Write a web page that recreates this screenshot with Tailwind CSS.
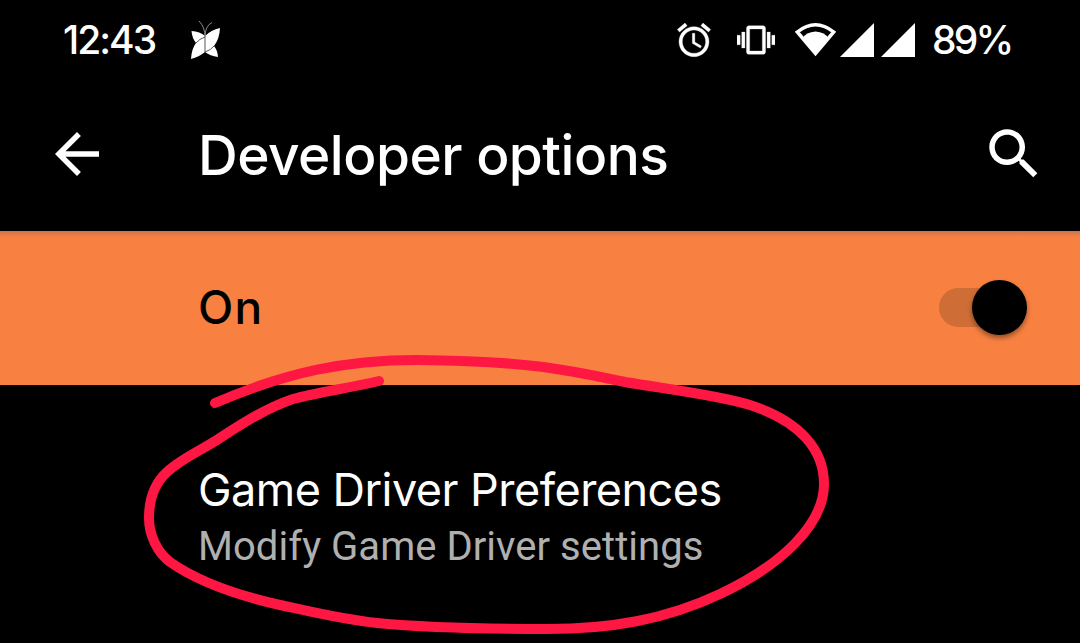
<!DOCTYPE html>
<html lang="en">
<head>
    <meta charset="UTF-8">
    <meta name="viewport" content="width=device-width, initial-scale=1.0">
    <title>Developer options</title>

    <!-- Tailwind CSS -->
    <script src="https://cdn.jsdelivr.net/npm/@tailwindcss/browser@4"></script>
</head>

<body class="bg-black text-white font-['Inter',sans-serif] overflow-hidden">

<div class="relative w-[1080px] h-[643px] overflow-hidden flex flex-col">

    <!-- Status bar -->
    <div class="h-20 shrink-0 flex items-center pl-[63px] pr-[69px]">

        <span class="w-[127px] text-[39px] leading-[82px] font-medium tracking-[-2px]">12:43</span>

        <!-- Butterfly -->
        <svg class="w-[30px] h-10" viewBox="0 0 30 40" fill="white">
            <path d="M1.500 11Q10 11.500 15 16Q21 10 30 8Q29.500 19 24 26Q27.500 30 28 37Q20 36 15 32Q9 37 1 39Q1.500 29 6 23Q2 18 1.500 11Z"/>
            <path d="M15 15V33M15 17Q9 19 6 23M15 32Q21 30 24 26" fill="none" stroke="#444" stroke-width="0.900"/>
            <path d="M15 17Q15 7 9 1M15 17Q15 6 22 2.500" fill="none" stroke="#999" stroke-width="0.900"/>
        </svg>

        <div class="ml-auto flex items-center">
            <!-- Alarm -->
            <svg class="w-10 h-10" viewBox="0 0 24 24" fill="white" stroke="white" stroke-width="0.200">
                <path d="M22 5.720l-4.600-3.860-1.290 1.530 4.600 3.860L22 5.720zM7.880 3.390L6.600 1.860 2 5.710l1.290 1.530 4.590-3.850zM12.500 8H11v6l4.750 2.850.750-1.230-4-2.370V8zM12 4c-4.970 0-9 4.030-9 9s4.020 9 9 9c4.970 0 9-4.030 9-9s-4.030-9-9-9zm0 16c-3.870 0-7-3.130-7-7s3.130-7 7-7 7 3.130 7 7-3.130 7-7 7z"/>
            </svg>
            <!-- Vibrate -->
            <svg class="ml-[23px] w-[38px] h-[38px]" viewBox="0 0 24 24" fill="white" stroke="white" stroke-width="0.200">
                <path d="M0 15h2V9H0v6zm3 2h2V7H3v10zm19-8v6h2V9h-2zm-3 8h2V7h-2v10zM16.500 3h-9C6.670 3 6 3.670 6 4.500v15c0 .830.670 1.500 1.500 1.500h9c.830 0 1.500-.670 1.500-1.500v-15c0-.830-.670-1.500-1.500-1.500zM16 19H8V5h8v14z"/>
            </svg>
            <!-- Wifi -->
            <svg class="ml-5 w-[41px] h-9" viewBox="0 0 41 36">
                <path d="M2.300 10Q20.500 -4.500 38.700 10L20.500 31.500Z" fill="none" stroke="white" stroke-width="3.500"/>
                <path d="M7.500 16.500Q11 10 20.500 9.500Q30 10 33.500 16.500L20.500 32Z" fill="white"/>
            </svg>
            <!-- Signal x2 -->
            <svg class="ml-1 w-[34px] h-[34px]" viewBox="0 0 34 34" fill="white"><path d="M0 34L34 0V34Z"/></svg>
            <svg class="ml-[7px] w-[34px] h-[34px]" viewBox="0 0 34 34" fill="white"><path d="M0 34L34 0V34Z"/></svg>
            <span class="ml-[17px] w-[79px] text-[39px] leading-[82px] font-medium tracking-[-2.8px] whitespace-nowrap">89%</span>
        </div>

    </div>

    <!-- Toolbar -->
    <div class="h-[151px] shrink-0 flex items-center pl-11 pr-[33px] pb-[3px]">
        <svg class="w-[66px] h-[66px]" viewBox="0 0 24 24" fill="white">
            <path d="M20 11H7.830l5.590-5.590L12 4l-8 8 8 8 1.410-1.410L7.830 13H20v-2z"/>
        </svg>
        <h1 class="ml-[88px] pt-0.5 text-[55px] leading-[66px] font-medium tracking-[-0.5px] whitespace-nowrap">Developer options</h1>
        <svg class="ml-auto w-[66px] h-[66px]" viewBox="0 0 24 24" fill="white">
            <path d="M15.500 14h-.790l-.280-.270C15.410 12.590 16 11.110 16 9.500 16 5.910 13.090 3 9.500 3S3 5.910 3 9.500 5.910 16 9.500 16c1.610 0 3.090-.590 4.230-1.570l.270.280v.790l5 4.990L20.490 19l-4.990-5zm-6 0C7.010 14 5 11.990 5 9.500S7.010 5 9.500 5 14 7.010 14 9.500 11.990 14 9.500 14z"/>
        </svg>
    </div>

    <!-- Master switch -->
    <div class="h-[154px] shrink-0 flex items-center justify-between pl-[198px] pr-[53px] pb-px bg-[#f88141] bg-linear-to-b from-[#c9744f] to-[#f88141] to-[6px] text-black">
        <span class="pb-0.5 text-[46px] leading-[60px] font-medium tracking-[1.2px]">On</span>
        <div class="flex w-[88px] h-[39px] items-center justify-end rounded-full bg-[#cf6d36]">
            <div class="w-[55px] h-[55px] shrink-0 rounded-full bg-black shadow-[0_3px_5px_rgba(0,0,0,0.4)]"></div>
        </div>
    </div>

    <!-- Preference -->
    <div class="flex-1 pl-[198px] pt-[75px]">
        <div class="text-[45px] leading-[60px] tracking-[-0.53px] whitespace-nowrap">Game Driver Preferences</div>
        <div class="font-['Roboto',sans-serif] text-[40px] leading-[54px] tracking-[0.04px] text-[#b0b0b0] whitespace-nowrap">Modify Game Driver settings</div>
    </div>

    <!-- Hand drawn circle -->
    <svg class="absolute inset-0 w-[1080px] h-[643px]" viewBox="0 0 1080 643" fill="none" stroke="#ff1744" stroke-width="10" stroke-linecap="round" stroke-linejoin="round">
        <path d="M215 403C287 372 345 360 417 360C520 361 560 368 620 381C650 387 715 394 750 405C800 421 824 450 824 484C824 525 780 566 720 594C665 620 610 629 547 629C490 629 430 628 377 623C345 620 312 612 280 605C240 596 200 583 170 562C157 552 149 535 149 518C149 500 155 483 167 472C182 458 202 450 220 438C246 421 267 408 293 399C318 392 350 388 379 381"/>
    </svg>

</div>

</body>
</html>
